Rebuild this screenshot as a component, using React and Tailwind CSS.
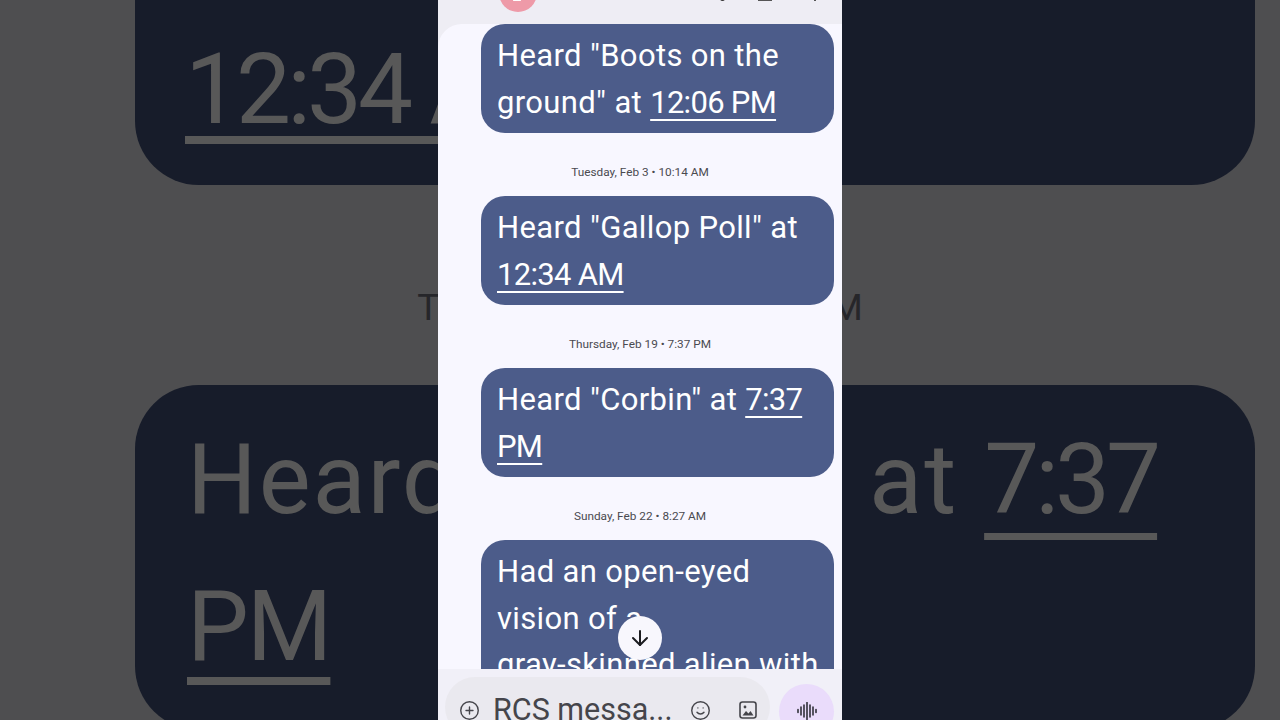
import React from "react";
import { ArrowDown, CirclePlus, Smile } from "lucide-react";

const font = "font-['Roboto','Inter',sans-serif]";

function Time({ children }) {
    return <span className="tracking-[-0.7px] underline decoration-2 underline-offset-[6px]">{children}</span>;
}

function Bubble({ className = "", children }) {
    return (
        <div className={`ml-[43px] w-[353px] rounded-[24px] bg-[#4c5c8a] px-4 pt-[9px] pb-[7px] text-[31px] leading-[46.5px] tracking-[0.35px] text-white ${className}`}>
            {children}
        </div>
    );
}

function Stamp({ children }) {
    return <div className="flex h-[63px] items-center justify-center pt-[16px] text-[11.8px] text-[#4a4a50]">{children}</div>;
}

// enlarged, dimmed copy of the thread that sits behind the phone
function Backdrop() {
    return (
        <div className="absolute inset-0 flex flex-col overflow-hidden bg-[#4e4e50] pl-[135px] text-[#585858]">
            <div className="relative h-[185px] w-[1120px] shrink-0 rounded-b-[64px] bg-[#171c2a]">
                <div className="absolute left-[50px] top-[44px] border-b-[8px] border-[#585858] text-[98px] leading-[92px] tracking-[-4px]">12:34 AM</div>
            </div>
            <div className="-ml-[135px] flex h-[200px] w-[1280px] shrink-0 items-center justify-center pt-[46px] text-[37px] text-[#26262a]">Thursday, Feb 19 • 7:37 PM</div>
            <div className="h-[345px] w-[1120px] shrink-0 rounded-[64px] bg-[#171c2a] px-[52px] pt-[21px] text-[98px] leading-[147px] tracking-[1.8px]">
                Heard "Corbin" at <span className="tracking-[-4px] underline decoration-[7px] underline-offset-[20px]">7:37</span>
                <br />
                <span className="tracking-[-2px] underline decoration-[8px] underline-offset-[17px]">PM</span>
            </div>
        </div>
    );
}

function GalleryIcon() {
    return (
        <svg width="20" height="20" viewBox="0 0 20 20" fill="none" stroke="#45454b" strokeWidth="1.6" className="ml-[27px] mt-[8px] shrink-0">
            <rect x="2" y="2" width="16" height="16" rx="2.5" />
            <circle cx="7" cy="7" r="1.4" fill="#45454b" stroke="none" />
            <path d="M4.5 15.5l3.5-4.5 2.5 2.5 2-2.5 3 4.5z" fill="#45454b" stroke="none" />
        </svg>
    );
}

function Composer() {
    return (
        <div className="absolute bottom-0 left-0 right-0 flex h-[51px] items-start gap-[9px] bg-[#f1f0f8] pl-[7px] pt-[8px]">
            <div className="flex h-[60px] w-[325px] items-start rounded-[30px] bg-[#eae9ef] pl-[14px] pt-[15px] text-[#45454b]">
                <CirclePlus size={21} strokeWidth={1.6} className="mt-[8px] shrink-0" />
                <span className="ml-[13px] w-[178px] shrink-0 whitespace-nowrap text-[30.5px] leading-[36px]">RCS messa...</span>
                <Smile size={21} strokeWidth={1.6} className="ml-[19px] mt-[8px] shrink-0" />
                <GalleryIcon />
            </div>
            <div className="mt-[7px] flex h-[55px] w-[55px] shrink-0 items-start justify-center rounded-full bg-[#eadcfb] pt-[18px]">
                <svg width="20" height="18" viewBox="0 0 20 18" stroke="#26262e" strokeWidth="1.5" strokeLinecap="round">
                    <path d="M1 7.5v3M4 5v8M7 3v12M10 0.5v17M13 3v12M16 5v8M19 7.5v3" />
                </svg>
            </div>
        </div>
    );
}

export default function App() {
    return (
        <div className={`relative h-[720px] w-[1280px] overflow-hidden ${font}`}>
            <Backdrop />
            <div className="relative mx-auto flex h-[720px] w-[404px] flex-col overflow-hidden bg-[#eeedf4]">
                {/* app bar, mostly scrolled off the top */}
                <div className="relative h-[24px] shrink-0">
                    <div className="absolute left-[61px] top-[-26px] h-[38px] w-[38px] rounded-full bg-[#ee9aa8]" />
                    <div className="absolute left-[75px] top-0 h-[1px] w-[8px] rounded-full bg-white" />
                    <div className="absolute left-[282px] top-[-4px] h-[5px] w-[5px] rounded-full bg-[#333]" />
                    <div className="absolute left-[320px] top-0 h-[1px] w-[14px] bg-[#555]" />
                    <div className="absolute left-[376px] top-[-3px] h-[4px] w-[2px] bg-[#555]" />
                </div>
                <div className="min-h-0 flex-1 overflow-hidden rounded-tl-[24px] bg-[#f8f7ff]">
                    <Bubble>
                        Heard "Boots on the ground" at <Time>12:06 PM</Time>
                    </Bubble>
                    <Stamp>Tuesday, Feb 3 • 10:14 AM</Stamp>
                    <Bubble>
                        Heard "Gallop Poll" at <Time>12:34 AM</Time>
                    </Bubble>
                    <Stamp>Thursday, Feb 19 • 7:37 PM</Stamp>
                    <Bubble>
                        Heard "Corbin" at <Time>7:37</Time> <Time>PM</Time>
                    </Bubble>
                    <Stamp>Sunday, Feb 22 • 8:27 AM</Stamp>
                    <Bubble className="rounded-b-none whitespace-nowrap">
                        Had an open-eyed
                        <br />
                        vision of a
                        <br />
                        gray-skinned alien with
                    </Bubble>
                </div>
                <div className="absolute left-[180px] top-[616px] flex h-[44px] w-[44px] items-center justify-center rounded-full bg-[#f8f7fd] text-[#1c1c20]">
                    <ArrowDown size={24} strokeWidth={2} />
                </div>
                <Composer />
            </div>
        </div>
    );
}
